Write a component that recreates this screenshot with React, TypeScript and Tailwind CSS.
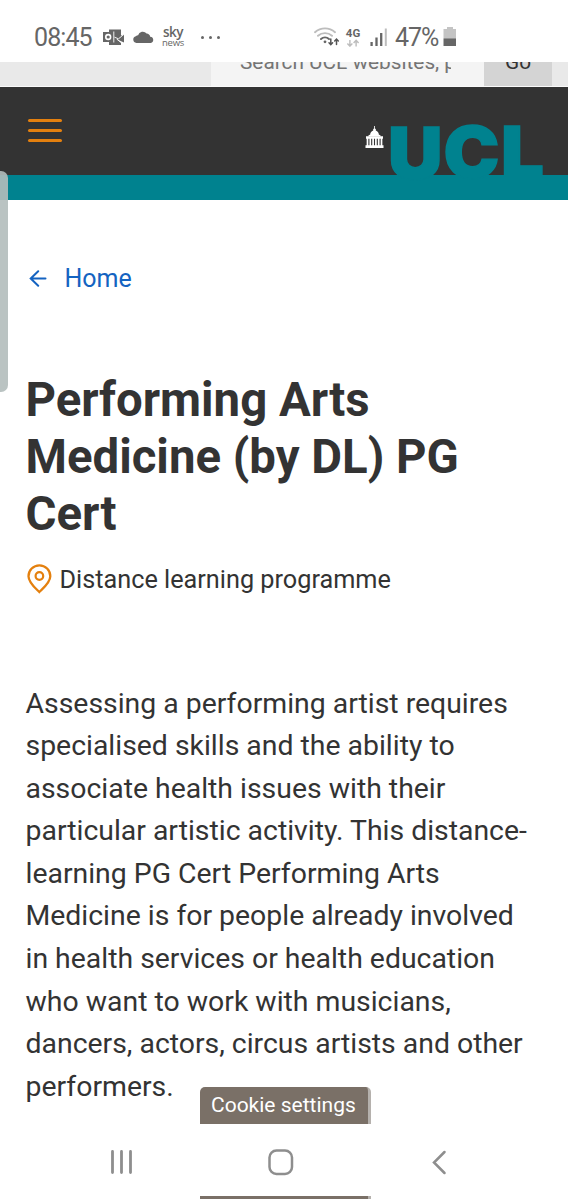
import React from "react";

const paragraph = [
  "Assessing a performing artist requires",
  "specialised skills and the ability to",
  "associate health issues with their",
  "particular artistic activity. This distance-",
  "learning PG Cert Performing Arts",
  "Medicine is for people already involved",
  "in health services or health education",
  "who want to work with musicians,",
  "dancers, actors, circus artists and other",
  "performers.",
];

const OutlookIcon = () => (
  <svg width="21" height="17" viewBox="0 0 21 17" fill="#666">
    <path d="M6 .5h12V7l-5 1.5 8-3v8l-8-3.5 5 3.5v2.5H6z" />
    <path d="M0 3h10.5v10H0z" />
    <circle cx="5.2" cy="8" r="2.4" fill="none" stroke="#fff" strokeWidth="1.6" />
    <path d="M10.8 2.5v11M11.5 8.2l4 1.6 5.5-4.5M14 10.2l5 4.2" fill="none" stroke="#fff" strokeWidth="0.9" />
  </svg>
);

const CloudIcon = () => (
  <svg width="21" height="12" viewBox="0 0 21 12" fill="#666">
    <path d="M3.4 12a3.4 3.4 0 0 1-.5-6.7 2.9 2.9 0 0 1 2.2-1A4.8 4.8 0 0 1 13.6 2.6 4 4 0 0 1 17.2 5.7 3.2 3.2 0 0 1 17.8 12z" />
  </svg>
);

const WifiIcon = () => (
  <svg width="26" height="20" viewBox="0 0 26 20" fill="none" strokeLinecap="round">
    <path d="M1 5.2a15 15 0 0 1 20 0M4 8.8a10.5 10.5 0 0 1 14 0" stroke="#bdbdbd" strokeWidth="1.9" />
    <path d="M7 12a6.2 6.2 0 0 1 8 0" stroke="#666" strokeWidth="2" />
    <circle cx="11" cy="14.8" r="1.4" fill="#666" />
    <path d="M16.8 12v5.5M15 15.8l1.8 1.9 1.8-1.9M22.5 17.5v-5.3M20.7 14l1.8-1.9 1.8 1.9" stroke="#555" strokeWidth="1.5" />
  </svg>
);

const SignalIcon = () => (
  <svg width="18" height="18" viewBox="0 0 18 18">
    <path d="M1.6 14v4M6.5 9.5V18M11.2 5v13" stroke="#666" strokeWidth="2.3" />
    <path d="M15.8 .5v17.5" stroke="#bdbdbd" strokeWidth="2" />
  </svg>
);

const StatusBar = () => (
  <div className="flex h-[62px] shrink-0 items-start text-[#666]">
    <div className="ml-[34px] mt-[21px] w-[69px] whitespace-nowrap text-[25px] leading-[34px] tracking-[-0.9px]">08:45</div>
    <div className="mt-[29px]"><OutlookIcon /></div>
    <div className="ml-[9px] mt-[31px]"><CloudIcon /></div>
    <div className="ml-[7px] mt-[26px] flex w-[24px] flex-col items-center text-center font-['Open_Sans']">
      <span className="text-[13.5px] font-semibold leading-[12px] tracking-[-0.5px]">sky</span>
      <span className="text-[9.5px] leading-[9px] tracking-[-0.2px]">news</span>
    </div>
    <div className="ml-[16px] mt-[36px] flex gap-[5px]">
      <i className="size-[3px] rounded-full bg-[#666]" />
      <i className="size-[3px] rounded-full bg-[#666]" />
      <i className="size-[3px] rounded-full bg-[#666]" />
    </div>
    <div className="ml-[94px] mt-[27px]"><WifiIcon /></div>
    <div className="ml-[5px] mt-[27px] flex w-[16px] flex-col items-center">
      <span className="text-[11.5px] font-bold leading-[12px]">4G</span>
      <svg width="14" height="8" viewBox="0 0 14 9" fill="none" stroke="#bdbdbd" strokeWidth="1.6">
        <path d="M3.5 1v7M.7 5l2.8 3 2.8-3M10.5 8.5v-7M7.7 4.5l2.8-3 2.8 3" />
      </svg>
    </div>
    <div className="ml-[9px] mt-[28px]"><SignalIcon /></div>
    <div className="ml-[7px] mt-[21px] w-[48px] whitespace-nowrap text-[25px] leading-[34px] tracking-[-1.1px]">47%</div>
    <svg className="mt-[27px]" width="14" height="19" viewBox="0 0 14 19">
      <path d="M4 0h6v2h3v9H.5V2H4z" fill="#c4c4c4" />
      <path d="M.5 11.3H13V19H.5z" fill="#666" />
    </svg>
  </div>
);

const SearchStrip = () => (
  <div className="flex h-[25px] shrink-0 overflow-hidden border-b border-[#fafafa] bg-[#e9e9e9]">
    <div className="ml-[211px] w-[273px] overflow-hidden bg-[#f4f4f4] pl-[29px]">
      <div className="-mt-[15px] w-[211px] overflow-hidden whitespace-nowrap text-[20.8px] leading-[30px] text-[#757575]">
        Search UCL websites, people
      </div>
    </div>
    <div className="w-[68px] bg-[#d4d4d4] text-center">
      <div className="-mt-[15px] text-[20.8px] leading-[30px] text-[#333]">Go</div>
    </div>
  </div>
);

const Dome = () => (
  <svg className="mt-[39px] shrink-0" width="19" height="22" viewBox="0 0 18 22" fill="#fff">
    <path d="M8.6 0h.8v2.5l.9.5v1.4c2 .8 3 2.3 3 4.2l1.8.9v.9H2.9v-.9l1.8-.9c0-1.9 1-3.4 3-4.2V3l.9-.5z" />
    <path d="M.5 10.3h17v2.4H.5zM0 19.3h18V22H0z" />
    <path d="M2 12v8M4.8 12v8M7.6 12v8M10.4 12v8M13.2 12v8M16 12v8" stroke="#fff" strokeWidth="1.7" />
  </svg>
);

const Header = () => (
  <header className="flex h-[113px] shrink-0 items-start border-b-[25px] border-[#00828f] bg-[#333]">
    <div className="ml-[28px] mt-[32px] flex w-[337px] flex-col gap-[7px]">
      <i className="h-[3px] w-[34px] rounded-full bg-[#e4800f]" />
      <i className="h-[3px] w-[34px] rounded-full bg-[#e4800f]" />
      <i className="h-[3px] w-[34px] rounded-full bg-[#e4800f]" />
    </div>
    <Dome />
    <svg className="ml-[3px] shrink-0" width="170" height="113" viewBox="387 87 170 113" fill="#00828f" stroke="#00828f" strokeWidth="1.4" fontFamily="Inter" fontWeight="900" fontSize="72">
      <text x="388" y="178.5" textLength="54.5" lengthAdjust="spacingAndGlyphs">U</text>
      <text x="443.5" y="178" textLength="56" lengthAdjust="spacingAndGlyphs">C</text>
      <text x="501" y="176.8" fontSize="70" textLength="43" lengthAdjust="spacingAndGlyphs">L</text>
    </svg>
  </header>
);

const CookieTab = () => (
  <div className="absolute left-[200px] top-[1087px] h-[37px] w-[171px] rounded-t-[5px] border-r-[3px] border-[#b5b1ad] bg-[#7a7067] pl-[11px] text-[21px] leading-[37px] whitespace-nowrap text-white">
    Cookie settings
  </div>
);

const NavBar = () => (
  <nav className="mt-auto flex h-[76px] shrink-0 flex-col">
    <svg className="mt-[24px]" width="568" height="30" viewBox="0 1148 568 30" fill="none" stroke="#8e8e8e" strokeLinecap="round">
      <path d="M112.5 1151.5v21M121.5 1151.5v21M130.5 1151.5v21" strokeWidth="2.8" />
      <rect x="269.5" y="1150.5" width="22.5" height="23.5" rx="7" strokeWidth="2.5" />
      <path d="M444.5 1152l-10.5 10.5 10.5 10.5" strokeWidth="2.5" />
    </svg>
    <div className="ml-[200px] mt-[18px] h-[3px] w-[171px] border-r-[3px] border-[#b5b1ad] bg-[#7a7067]" />
  </nav>
);

export default function App() {
  return (
    <div className="relative flex h-[1200px] w-[568px] flex-col overflow-hidden bg-white font-[Roboto,sans-serif] text-[#333]">
      <StatusBar />
      <SearchStrip />
      <Header />

      <main className="pl-[25.5px]">
        <a className="mt-[62px] flex h-[34px] items-center text-[25px] text-[#1463c1]">
          <svg className="ml-[3px] mr-[18px]" width="18" height="18" viewBox="0 0 18 18" fill="none" stroke="currentColor" strokeWidth="2" strokeLinecap="round">
            <path d="M16.5 8.5H2M9.2 1.2L1.7 8.5l7.5 7.3" />
          </svg>
          <span className="whitespace-nowrap">Home</span>
        </a>

        <h1 className="mt-[76px] whitespace-nowrap text-[47.35px] font-bold leading-[57px]">
          Performing Arts
          <br />
          Medicine (by DL) PG
          <br />
          Cert
        </h1>

        <div className="mt-[20px] flex h-[34px] items-center text-[25.25px]">
          <svg className="-mt-[2px] mr-[8px] ml-[1px]" width="25" height="30" viewBox="0 0 25 30" fill="none" stroke="#e4800f">
            <path d="M12.3 28C8.5 24.2 1.5 18.6 1.5 12.2a10.9 10.9 0 0 1 21.8 0c0 6.4-7.2 12-11 15.8z" strokeWidth="2.3" />
            <circle cx="12.4" cy="12" r="3.8" strokeWidth="2.2" />
          </svg>
          <span className="whitespace-nowrap">Distance learning programme</span>
        </div>

        <p className="mt-[85.5px] whitespace-nowrap text-[28.4px] leading-[42.6px]">
          {paragraph.map((line) => (
            <span key={line} className="block">{line}</span>
          ))}
        </p>
      </main>

      <NavBar />
      <CookieTab />

      {/* edge panel handle */}
      <div className="absolute -left-2 top-[171px] h-[221px] w-4 rounded-[7px] bg-[#b3bdbb]/90" />
    </div>
  );
}
